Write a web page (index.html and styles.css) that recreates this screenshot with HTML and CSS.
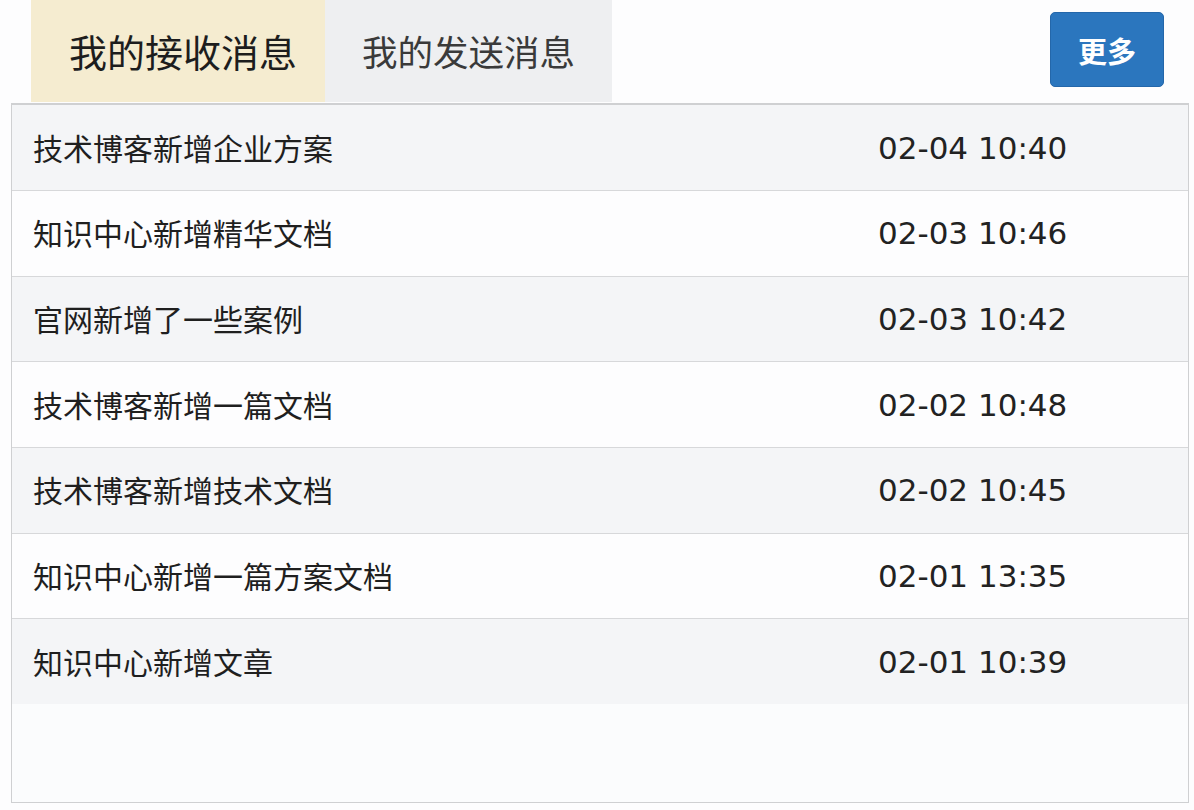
FILE: index.html
```html
<!DOCTYPE html>
<html lang="zh-CN">
<head>
<meta charset="utf-8">
<title>消息</title>
<link rel="stylesheet" href="styles.css">
</head>
<body>
<div class="page">
  <div class="header">
    <div class="tabs">
      <div class="tab tab-active">我的接收消息</div>
      <div class="tab tab-normal">我的发送消息</div>
    </div>
    <button class="btn-more">更多</button>
  </div>
  <div class="panel">
    <div class="row"><span class="title">技术博客新增企业方案</span><span class="date">02-04 10:40</span></div>
    <div class="row"><span class="title">知识中心新增精华文档</span><span class="date">02-03 10:46</span></div>
    <div class="row"><span class="title">官网新增了一些案例</span><span class="date">02-03 10:42</span></div>
    <div class="row"><span class="title">技术博客新增一篇文档</span><span class="date">02-02 10:48</span></div>
    <div class="row"><span class="title">技术博客新增技术文档</span><span class="date">02-02 10:45</span></div>
    <div class="row"><span class="title">知识中心新增一篇方案文档</span><span class="date">02-01 13:35</span></div>
    <div class="row"><span class="title">知识中心新增文章</span><span class="date">02-01 10:39</span></div>
  </div>
</div>
</body>
</html>
```
FILE: styles.css
```css
html, body {
  margin: 0;
  padding: 0;
  background: #fdfdfe;
}
body {
  font-family: "Noto Sans CJK SC", "Noto Sans", sans-serif;
  color: #222;
}
.page {
  width: 1194px;
  height: 810px;
  display: flex;
  flex-direction: column;
}
.header {
  display: flex;
  align-items: flex-start;
  height: 103px;
  padding-left: 31px;
  padding-right: 30px;
}
.tabs {
  display: flex;
  height: 102px;
}
.tab {
  display: flex;
  align-items: center;
  justify-content: center;
  height: 102px;
  box-sizing: border-box;
  padding-bottom: 2px;
}
.tab-active {
  width: 294px;
  padding-left: 10px;
  background: #f5ecd0;
  font-size: 38px;
  color: #1d1d1d;
}
.tab-normal {
  width: 287px;
  background: #eeeff1;
  font-size: 35.5px;
  color: #3a3a3a;
}
.btn-more {
  margin-left: auto;
  margin-top: 12px;
  width: 114px;
  height: 75px;
  border: 1px solid #2467aa;
  border-radius: 5px;
  background: #2b76be;
  color: #fff;
  font-family: "Noto Sans CJK SC", sans-serif;
  font-size: 29px;
  font-weight: 700;
  padding: 0;
}
.panel {
  margin: 0 5px 0 11px;
  height: 700px;
  box-sizing: border-box;
  border: 1px solid #cfd0d2;
  border-top: 2px solid #cfd0d2;
  background: #fbfcfd;
  display: flex;
  flex-direction: column;
}
.row {
  height: 85.7px;
  box-sizing: border-box;
  display: grid;
  grid-template-columns: 845px 1fr;
  align-items: center;
  padding-left: 21px;
  border-top: 1px solid #d7d8da;
}
.row:first-child {
  border-top: none;
  height: 85px;
}
.row:nth-child(odd) {
  background: #f4f5f7;
}
.row:nth-child(even) {
  background: #fdfdfe;
}
.title {
  font-size: 30px;
  color: #1f1f1f;
  padding-bottom: 2px;
}
.date {
  font-family: "DejaVu Sans", Verdana, sans-serif;
  font-size: 31px;
  color: #222;
}
```
